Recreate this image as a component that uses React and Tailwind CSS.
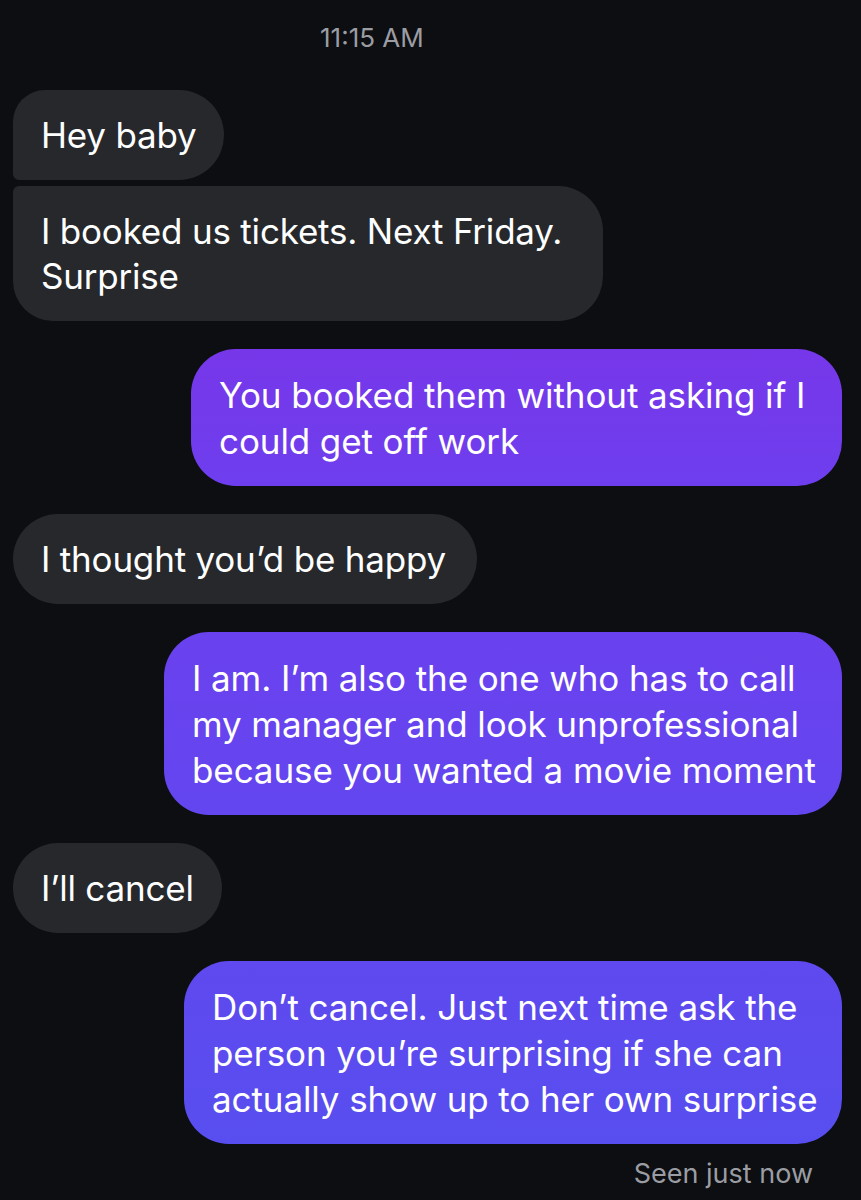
const font = { fontFamily: 'Inter, "Noto Sans", sans-serif' }

function Incoming({ lines, width, shape = 'rounded-[45px]' }) {
  return (
    <div className={`self-start ${width} ${shape} bg-[#26282c] px-[28px] py-[22.5px] text-[35px] leading-[45px] text-white tracking-[-0.2px]`}>
      {lines.map((l, i) => (
        <div key={i} className="whitespace-nowrap">{l}</div>
      ))}
    </div>
  )
}

function Outgoing({ lines, width, bg }) {
  return (
    <div className={`self-end ${width} ${bg} rounded-[45px] px-[28px] py-[22.5px] text-[35px] leading-[46px] text-white tracking-[-0.1px]`}>
      {lines.map((l, i) => (
        <div key={i} className="whitespace-nowrap">{l}</div>
      ))}
    </div>
  )
}

export default function App() {
  return (
    <div className="min-h-[1200px] w-[861px] overflow-hidden bg-[#0c0e12]" style={font}>
      <div className="pl-[320px] pt-[21px] text-[26px] leading-[34px] text-[#9b9da2]">11:15 AM</div>
      <div className="flex flex-col pl-[13px] pr-[19px] pt-[35px]">
        <Incoming lines={['Hey baby']} width="w-[211px]" shape="rounded-[45px] rounded-tl-[32px] rounded-bl-[6px]" />
        <div className="h-[6px]" />
        <Incoming
          lines={['I booked us tickets. Next Friday.', 'Surprise']}
          width="w-[590px]"
          shape="rounded-[45px] rounded-tl-[6px] rounded-bl-[40px]"
        />
        <div className="h-[28px]" />
        <Outgoing
          lines={['You booked them without asking if I', 'could get off work']}
          width="w-[651px]"
          bg="bg-gradient-to-b from-[#7637e9] to-[#6e3eee]"
        />
        <div className="h-[28px]" />
        <Incoming lines={['I thought you’d be happy']} width="w-[464px]" />
        <div className="h-[28px]" />
        <Outgoing
          lines={['I am. I’m also the one who has to call', 'my manager and look unprofessional', 'because you wanted a movie moment']}
          width="w-[678px]"
          bg="bg-gradient-to-b from-[#6a41ee] to-[#6346ef]"
        />
        <div className="h-[28px]" />
        <Incoming lines={['I’ll cancel']} width="w-[209px]" />
        <div className="h-[28px]" />
        <Outgoing
          lines={['Don’t cancel. Just next time ask the', 'person you’re surprising if she can', 'actually show up to her own surprise']}
          width="w-[658px]"
          bg="bg-gradient-to-b from-[#5f49ef] to-[#584eef]"
        />
        <div className="self-end pr-[29px] pt-[12px] text-[27px] leading-[36px] text-[#9b9da2]">Seen just now</div>
      </div>
    </div>
  )
}
